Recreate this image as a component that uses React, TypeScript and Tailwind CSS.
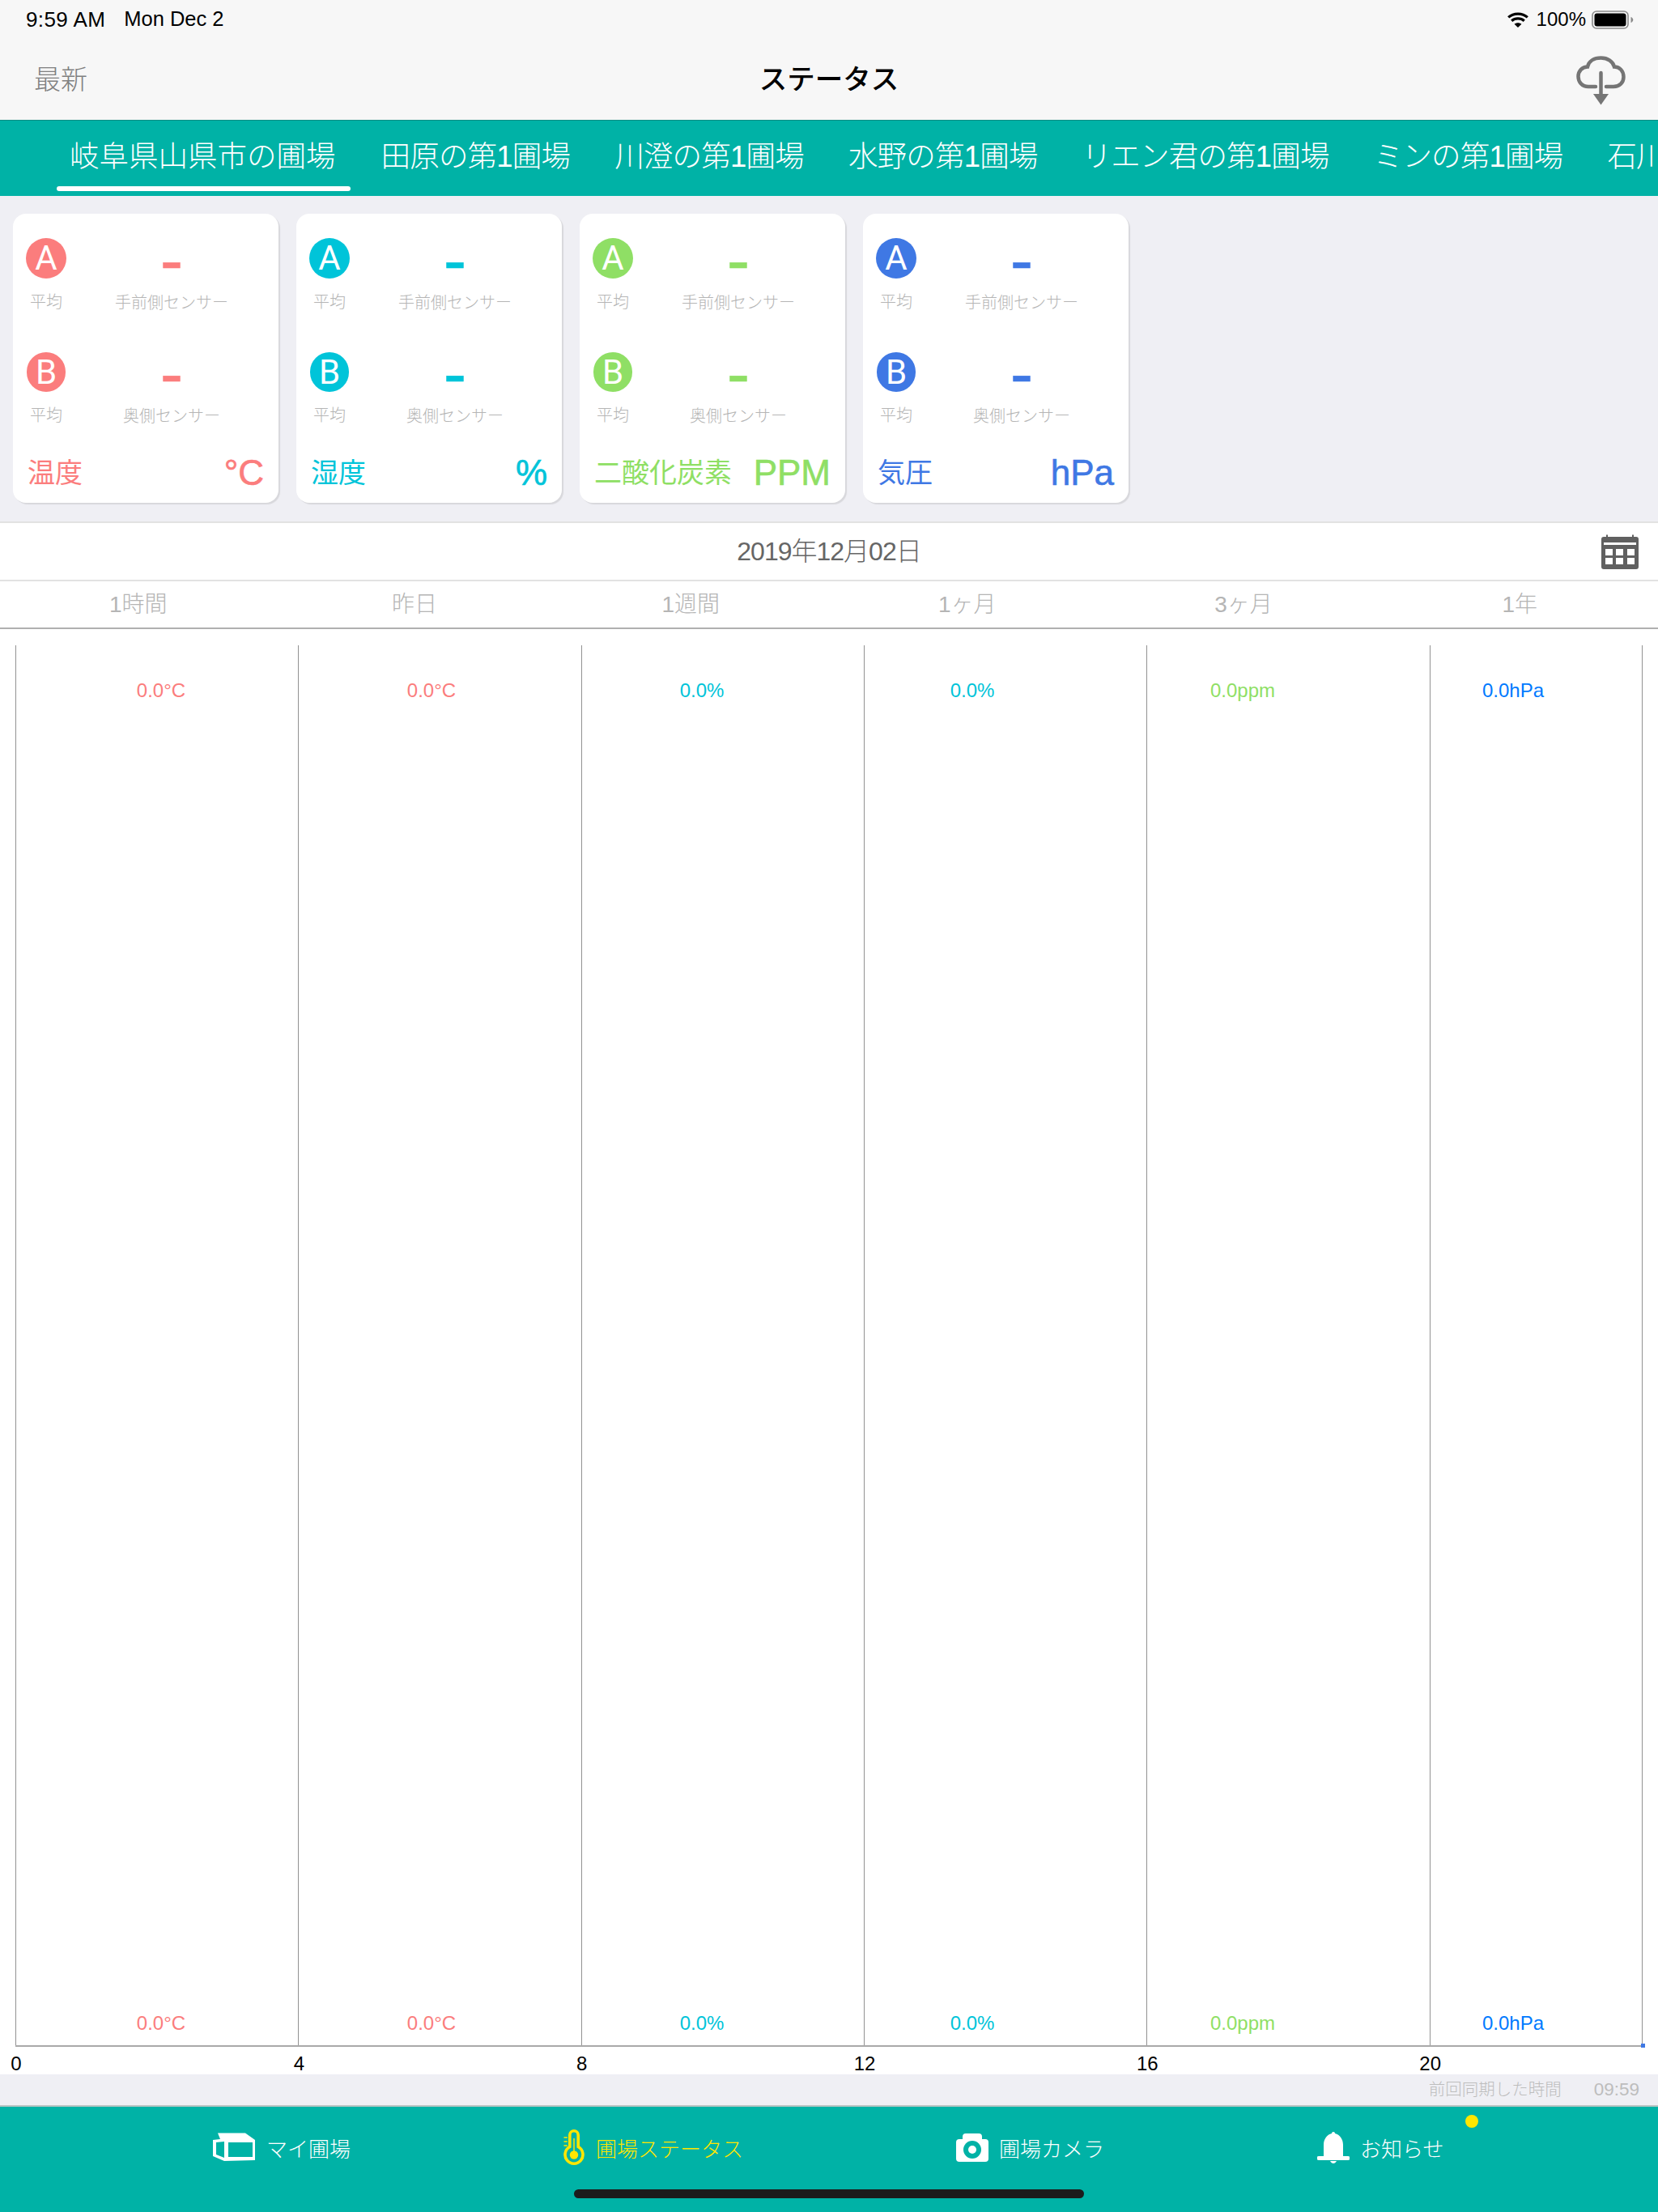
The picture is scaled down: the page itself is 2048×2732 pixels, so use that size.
import React from "react";

const cards = [
  { name: "温度", unit: "°C", text: "text-[#fb7d7d]", bg: "bg-[#fb7d7d]" },
  { name: "湿度", unit: "%", text: "text-[#00c4d9]", bg: "bg-[#00c4d9]" },
  { name: "二酸化炭素", unit: "PPM", text: "text-[#8fdf65]", bg: "bg-[#8fdf65]" },
  { name: "気圧", unit: "hPa", text: "text-[#3f78e4]", bg: "bg-[#3f78e4]" },
];

const farms = ["田原の第1圃場", "川澄の第1圃場", "水野の第1圃場", "リエン君の第1圃場", "ミンの第1圃場", "石川の第1圃場"];
const ranges = ["1時間", "昨日", "1週間", "1ヶ月", "3ヶ月", "1年"];
const values = [
  { v: "0.0°C", c: "text-[#fb7d7d]" },
  { v: "0.0°C", c: "text-[#fb7d7d]" },
  { v: "0.0%", c: "text-[#00c4d9]" },
  { v: "0.0%", c: "text-[#00c4d9]" },
  { v: "0.0ppm", c: "text-[#8fdf65]" },
  { v: "0.0hPa", c: "text-[#007aff]" },
];
const ticks = ["0", "4", "8", "12", "16", "20"];

function Wifi() {
  return (
    <svg width="26" height="19" viewBox="0 0 26 19" fill="none" stroke="#000" strokeWidth="3.200">
      <path d="M1.200 6.400C7.600 0.600 18.400 0.600 24.800 6.400" />
      <path d="M5.200 10.800C9.600 7 16.400 7 20.800 10.800" />
      <path d="M13 19L8.600 14.800C11.200 12.800 14.800 12.800 17.400 14.800Z" fill="#000" stroke="none" />
    </svg>
  );
}

function Battery() {
  return (
    <svg width="53" height="23" viewBox="0 0 53 23">
      <rect x="1" y="1" width="44" height="21" rx="5" fill="none" stroke="#8a8a8a" strokeWidth="1.600" />
      <rect x="3.500" y="3.500" width="39" height="16" rx="3" fill="#000" />
      <path d="M48.500 8v7c1.600-.6 2.800-2 2.800-3.500S50.100 8.600 48.500 8z" fill="#8a8a8a" />
    </svg>
  );
}

function CloudDown() {
  return (
    <svg width="61" height="61" viewBox="0 0 61 61" fill="none" stroke="#757575" strokeWidth="4.500">
      <path d="M24 38H15C7.500 38 2.500 32.500 2.500 25.500S7.500 13.500 14 13.500C15.500 6.500 22 2.500 30.500 2.500S45.500 7 47 13.500C54 13.500 58.500 19 58.500 26S53.500 38 46 38H37" strokeLinecap="round" />
      <path d="M30.500 21V53" strokeLinecap="round" />
      <path d="M21 47L30.500 60.500L40 47Z" fill="#757575" stroke="none" />
    </svg>
  );
}

function Calendar() {
  return (
    <svg width="46" height="43" viewBox="0 0 46 43">
      <path d="M6 3V0.500H8V3H38V0.500H40V3H43A3 3 0 0 1 46 6V40A3 3 0 0 1 43 43H3A3 3 0 0 1 0 40V6A3 3 0 0 1 3 3Z" fill="#606060" />
      <rect x="3" y="10" width="40" height="3" fill="#fff" />
      <rect x="5" y="18" width="9" height="8" fill="#fff" />
      <rect x="18" y="18" width="9" height="8" fill="#fff" />
      <rect x="32" y="18" width="9" height="8" fill="#fff" />
      <rect x="5" y="29" width="9" height="8" fill="#fff" />
      <rect x="18" y="29" width="9" height="8" fill="#fff" />
      <rect x="32" y="29" width="9" height="8" fill="#fff" />
    </svg>
  );
}

function FieldIcon() {
  return (
    <svg width="53" height="36" viewBox="13 15 53 36">
      <path d="M19 15.500H53L65 24V49L27 50L13 44V24L22 23Z" fill="#fff" />
      <path d="M17 27L27 26V46L17 42Z" fill="#00b2a6" />
      <rect x="32" y="27" width="30" height="18" fill="#00b2a6" />
    </svg>
  );
}

function ThermoIcon() {
  return (
    <svg width="30" height="44" viewBox="12 10 30 44" fill="none">
      <path d="M19.800 31.500V17A5.200 5.200 0 0 1 30.200 17V31.500A11 11 0 1 1 19.800 31.500Z" stroke="#ffe600" strokeWidth="3.600" />
      <circle cx="25" cy="41.500" r="5.200" fill="#ffe600" />
      <path d="M25 21V38" stroke="#ffe600" strokeWidth="1.500" />
      <path d="M12.500 20H16.800M12.500 25H16.800M12.500 30H16.800" stroke="#ffe600" strokeWidth="1.500" />
    </svg>
  );
}

function CameraIcon() {
  return (
    <svg width="40" height="35" viewBox="0 0 40 35">
      <rect x="8" y="0" width="24" height="14" rx="4" fill="#fff" />
      <rect x="0" y="7" width="40" height="28" rx="4" fill="#fff" />
      <circle cx="20" cy="20" r="11" fill="#00b2a6" />
      <circle cx="20" cy="20" r="5" fill="#fff" />
    </svg>
  );
}

function BellIcon() {
  return (
    <svg width="40" height="39" viewBox="0 0 40 39" fill="#fff">
      <path d="M20 0C21.200 0 22 .8 22 2C28 3.500 32 9 32 16V30H38A2 2 0 0 1 38 35H2A2 2 0 0 1 2 30H8V16C8 9 12 3.500 18 2C18 .8 18.800 0 20 0Z" />
      <path d="M16 36H24C23 38 21.500 39 20 39S17 38 16 36Z" />
    </svg>
  );
}

function SensorRow({ letter, label, card, small }: { letter: string; label: string; card: (typeof cards)[number]; small?: boolean }) {
  return (
    <div className="grid grid-cols-[82px_228px] h-[140px]">
      <div className="flex flex-col items-center">
        <div className={`flex items-center justify-center rounded-full text-white font-['Roboto',sans-serif] text-[42px] leading-none ${card.bg} ${small ? "w-[48px] h-[49px] mt-[1px]" : "w-[50px] h-[50px]"}`}>
          {letter}
        </div>
        <div className="mt-[15px] text-[20px] leading-[28px] text-[#b5b5b5] font-light">平均</div>
      </div>
      <div className="flex flex-col items-center">
        <div className={`mt-[2px] h-[50px] text-[84px] leading-[50px] font-['Liberation_Sans',sans-serif] [-webkit-text-stroke:0.7px] ${card.text}`}>-</div>
        <div className="mt-[14px] text-[20px] leading-[28px] text-[#b5b5b5] font-light">{label}</div>
      </div>
    </div>
  );
}

function Card({ card }: { card: (typeof cards)[number] }) {
  return (
    <div className="w-[328px] h-[357px] rounded-[16px] bg-white shadow-[2px_2px_1px_#d8d8dc] pt-[30px]">
      <SensorRow letter="A" label="手前側センサー" card={card} />
      <SensorRow letter="B" label="奥側センサー" card={card} small />
      <div className={`-mt-[15px] px-[18px] h-[50px] flex items-center justify-between ${card.text}`}>
        <span className="text-[34px] leading-[50px]">{card.name}</span>
        <span className="text-[44px] leading-[50px] font-['Liberation_Sans',sans-serif] [-webkit-text-stroke:0.6px]">{card.unit}</span>
      </div>
    </div>
  );
}

export default function App() {
  return (
    <div className="w-[2048px] h-[2732px] flex flex-col overflow-hidden bg-white font-['Liberation_Sans','Noto_Sans_CJK_JP',sans-serif]">
      <header className="h-[149px] bg-[#f7f7f7]">
        <div className="h-[48px] flex items-center justify-between pl-[32px] pr-[29px] text-black">
          <div className="flex gap-[23px] text-[26px] leading-none">
            <span className="tracking-[0.4px]">9:59 AM</span>
            <span className="text-[25.5px]">Mon Dec 2</span>
          </div>
          <div className="flex items-center gap-[10px] text-[24px] leading-none">
            <Wifi />
            <div className="flex items-center gap-[7px]">
              <span>100%</span>
              <Battery />
            </div>
          </div>
        </div>
        <div className="h-[101px] flex items-center justify-between pl-[42px] pr-[40px] relative border-b border-[#0d8c82]">
          <span className="text-[33px] leading-none font-light text-[#808080]">最新</span>
          <span className="text-[34.5px] leading-none font-medium text-black absolute left-1/2 -translate-x-1/2 whitespace-nowrap">ステータス</span>
          <div className="mt-[2px]">
            <CloudDown />
          </div>
        </div>
      </header>

      <nav className="h-[93px] bg-[#00b2a6] flex gap-[21px] pl-[70px] overflow-hidden text-white text-[36.5px] font-light whitespace-nowrap">
        <div className="pl-[16px] pr-[18px] relative flex items-center h-[93px] pb-[2px] shrink-0">
          岐阜県山県市の圃場
          <div className="absolute left-0 right-0 bottom-[6px] h-[6px] rounded-full bg-white" />
        </div>
        {farms.map((f) => (
          <div key={f} className="px-[17px] flex items-center h-[93px] pb-[2px] shrink-0 tracking-[-0.8px]">
            {f}
          </div>
        ))}
      </nav>

      <section className="h-[404px] shrink-0 bg-[#efeff4] flex gap-[22px] pl-[16px] pt-[22px] border-b-2 border-[#e2e2e2]">
        {cards.map((c) => (
          <Card key={c.name} card={c} />
        ))}
      </section>

      <div className="h-[72px] shrink-0 bg-white border-b-2 border-[#e2e2e2] flex items-center justify-center relative">
        <span className="text-[32px] leading-none font-light tracking-[-1px] text-[#666]">2019年12月02日</span>
        <div className="absolute right-[24px] top-[14px]">
          <Calendar />
        </div>
      </div>

      <div className="h-[59px] shrink-0 grid grid-cols-6 items-center border-b-2 border-[#b0b0b0] bg-white">
        {ranges.map((r) => (
          <span key={r} className="text-center text-[28px] leading-none font-light text-[#b5b5b5]">
            {r}
          </span>
        ))}
      </div>

      <main className="h-[1785px] shrink-0 bg-white pt-[20px]">
        <div className="relative ml-[19px] w-[2010px] h-[1731px] flex border-b-2 border-[#a9a9a9]">
          {[0, 1, 2, 3, 4].map((i) => (
            <div key={i} className="w-[349.33px] shrink-0 h-full border-l border-[#929292]" />
          ))}
          <div className="flex-1 h-full border-x border-[#929292]" />
          <div className="absolute right-[-3px] bottom-[-3px] w-[5px] h-[5px] bg-[#3f78e4]" />
          <div className="absolute left-[13px] top-0 w-[2004px] h-full flex flex-col justify-between pt-[41px] pb-[12px]">
            {[0, 1].map((row) => (
              <div key={row} className="grid grid-cols-6">
                {values.map((x, i) => (
                  <span key={i} className={`text-center text-[24px] leading-[30px] font-light ${x.c}`}>
                    {x.v}
                  </span>
                ))}
              </div>
            ))}
          </div>
        </div>
        <div className="flex pl-[20px] h-[32px] pt-[7px] text-[24px] leading-[28px] text-black">
          {ticks.map((t) => (
            <div key={t} className="w-[349.33px] shrink-0">
              <span className="inline-block -translate-x-1/2">{t}</span>
            </div>
          ))}
        </div>
      </main>

      <div className="h-[40px] shrink-0 bg-[#efeff4] border-b-2 border-[#b9c4c3] flex items-center justify-end gap-[40px] pr-[23px] leading-none text-[#bdbdbd] font-light">
        <span className="text-[20.5px]">前回同期した時間</span>
        <span className="text-[22.5px]">09:59</span>
      </div>

      <footer className="flex-1 bg-[#00b2a6] flex flex-col">
        <div className="flex gap-[263px] pl-[263px] h-[102px] pt-[29px] text-[26px] font-light leading-none text-white">
          <div className="flex items-center gap-[13px] h-[42px]">
            <FieldIcon />
            <span className="whitespace-nowrap pt-[5px]">マイ圃場</span>
          </div>
          <div className="flex items-center gap-[10px] h-[42px] text-[#ffe600]">
            <ThermoIcon />
            <span className="whitespace-nowrap pt-[5px]">圃場ステータス</span>
          </div>
          <div className="flex items-center gap-[13px] h-[42px]">
            <CameraIcon />
            <span className="whitespace-nowrap pt-[5px]">圃場カメラ</span>
          </div>
          <div className="flex items-center gap-[13px] h-[42px] relative">
            <BellIcon />
            <span className="whitespace-nowrap pt-[5px]">お知らせ</span>
            <div className="absolute left-[183px] -top-[19px] w-[16px] h-[16px] rounded-full bg-[#ffe600]" />
          </div>
        </div>
        <div className="mx-auto w-[630px] h-[11px] rounded-full bg-[#1c1c1c]" />
      </footer>
    </div>
  );
}
